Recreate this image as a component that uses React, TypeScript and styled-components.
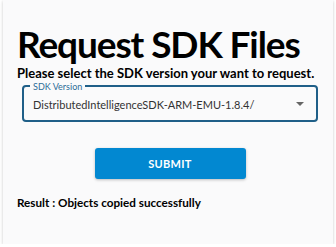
import React from 'react';
import styled, { createGlobalStyle } from 'styled-components';

const GlobalStyle = createGlobalStyle`
  html, body {
    margin: 0;
    padding: 0;
    background: #ffffff;
  }
  body {
    font-family: Lato, "Noto Sans", sans-serif;
    color: #000;
  }
`;

const Card = styled.div`
  margin: 0 3px;
  height: 244px;
  box-sizing: border-box;
  padding: 22px 14px 0 14px;
  background: #fafafb;
  box-shadow: 0 1px 3px rgba(0, 0, 0, 0.22);
`;

const Title = styled.h1`
  margin: 0;
  font-size: 37px;
  line-height: 44px;
  font-weight: 700;
  letter-spacing: -1.1px;
  white-space: nowrap;
`;

const Subtitle = styled.p`
  margin: 0;
  font-size: 13px;
  line-height: 14px;
  font-weight: 700;
  white-space: nowrap;
`;

const Field = styled.div`
  position: relative;
  margin: 5px 1px 0 5px;
  height: 37px;
  box-sizing: border-box;
  border: 2px solid #1f5f88;
  border-radius: 4px;
  display: flex;
  align-items: center;
  padding: 0 12px 0 9px;
`;

const FieldLabel = styled.span`
  position: absolute;
  top: -5px;
  left: 6px;
  padding: 0 3px;
  background: #fafafb;
  font-size: 9px;
  line-height: 9px;
  color: #2d6d98;
`;

const Value = styled.span`
  flex: 1;
  font-size: 11px;
  color: #333;
  white-space: nowrap;
  padding-top: 1px;
`;

const Caret = styled.svg`
  width: 8px;
  height: 4px;
  fill: #666;
`;

const Actions = styled.div`
  display: flex;
  justify-content: center;
  margin-top: 26px;
`;

const SubmitButton = styled.button`
  width: 151px;
  height: 31px;
  border: none;
  border-radius: 3px;
  background: #0288d1;
  color: #fff;
  font-family: inherit;
  font-size: 11px;
  font-weight: 700;
  letter-spacing: 0.3px;
  box-shadow: 0 1px 3px rgba(0, 0, 0, 0.25);
  margin-left: 4px;
`;

const Result = styled.p`
  margin: 15px 0 0 0;
  font-size: 11.7px;
  line-height: 16px;
  font-weight: 700;
`;

export default function App() {
  return (
    <>
      <GlobalStyle />
      <Card>
        <Title>Request SDK Files</Title>
        <Subtitle>Please select the SDK version your want to request.</Subtitle>
        <Field>
          <FieldLabel>SDK Version</FieldLabel>
          <Value>DistributedIntelligenceSDK-ARM-EMU-1.8.4/</Value>
          <Caret viewBox="0 0 8 4">
            <path d="M0 0h8L4 4z" />
          </Caret>
        </Field>
        <Actions>
          <SubmitButton>SUBMIT</SubmitButton>
        </Actions>
        <Result>Result : Objects copied successfully</Result>
      </Card>
    </>
  );
}
